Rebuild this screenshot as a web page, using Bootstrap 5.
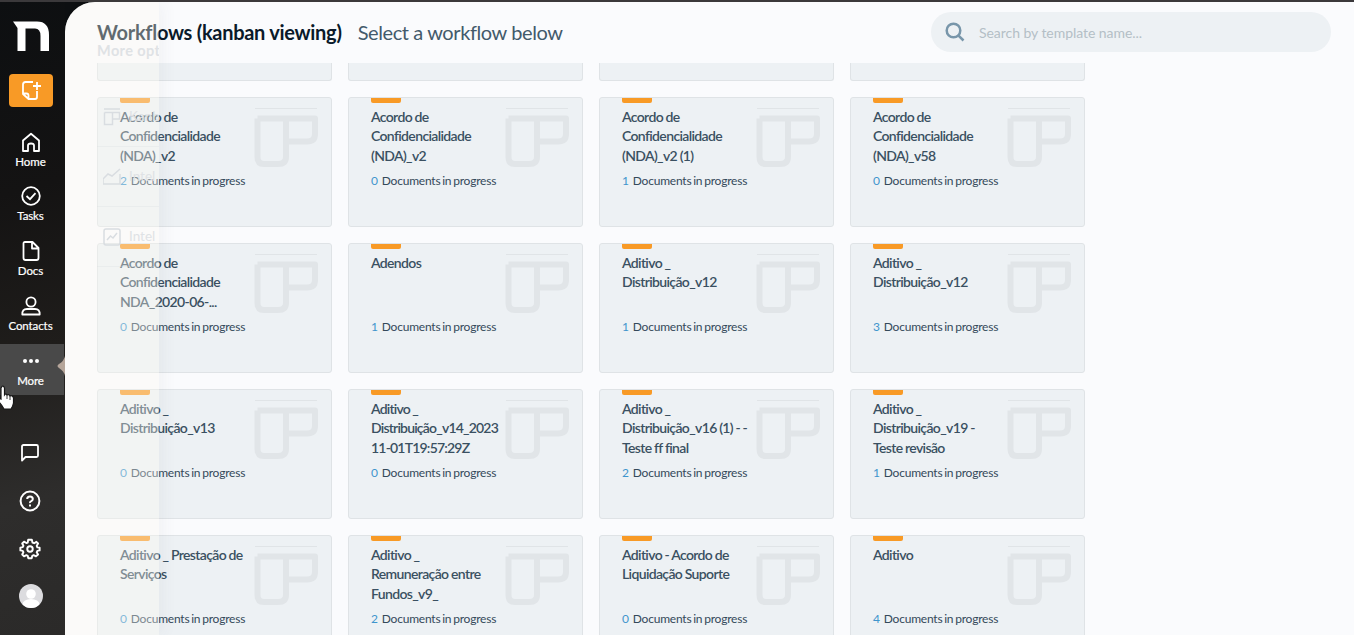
<!DOCTYPE html>
<html lang="en">
<head>
<meta charset="utf-8">
<title>Workflows</title>
<link href="https://cdn.jsdelivr.net/npm/bootstrap@5.3.0/dist/css/bootstrap.min.css" rel="stylesheet">
<style>
body{font-family:Lato,"Liberation Sans",sans-serif;background:linear-gradient(165deg,#0d0f11 0,#141313 30%,#1f1d1b 55%,#2e2d2c 78%,#2b2a29 100%) 0 0/65px 100% no-repeat #0d0f11;height:100vh;overflow:hidden;color:#34495a}
.topline{height:2px;background:#3b393b}
.side{width:65px;color:#fff;font-size:11.5px;letter-spacing:-.1px;padding-right:4px}
.side svg{display:block}
.logo{margin:19px 0 0 1px}
.new-btn{width:44px;height:33px;background:#f89a26;border-radius:4px;margin-top:23px;margin-left:1px}
.side-item{height:55px;line-height:14px;padding-top:10px;width:61px;flex-shrink:0;-webkit-text-stroke:.2px #fff}
.side-item svg{margin-bottom:3px}
.side-item.first{margin-top:15px;height:54px}
.side-item.current{height:51px;width:64px;padding-right:3px;align-self:flex-start;background:#494949;margin-top:3px;padding-top:7px}
.notch{right:-1px;top:12px}
.foot-icon{flex-shrink:0;margin-right:1px}
.main-pane{background:#fafbfd;border-top-left-radius:30px}
.page-head{height:61px;padding:10px 23px 0 32px}
.page-title{font-size:20px;font-weight:700;color:#0a1a2a;letter-spacing:-.28px;margin:0}
.page-sub{font-size:20px;color:#435a6b;margin-left:16px;letter-spacing:-.4px}
.title-row{height:40px}
.search-box{width:400px;height:40px;background:#edf1f4;border-radius:20px;font-size:14px;color:#b4bfc6;padding-left:14px}
.search-box span{margin-left:14px;letter-spacing:-.05px}
.flow-grid{display:grid;grid-template-columns:repeat(4,235px);grid-template-rows:18px;grid-auto-rows:130px;gap:16px;padding-left:32px}
.flow-card{background:#edf1f4;border:1px solid #dfe3e6;border-radius:3px;padding:0 12px 0 22px;overflow:hidden}
.flow-tail{border-top:0;border-radius:0 0 3px 3px}
.tab-mark{width:30px;height:5px;background:#f89a26;border-radius:0 0 2px 2px}
.flow-name{font-size:14px;line-height:19.4px;font-weight:600;width:128px;height:70px;padding-top:4px;letter-spacing:-.64px;word-spacing:-.3px;white-space:nowrap;color:#3a5061}
.flow-name.tight{letter-spacing:-.8px}
.flow-count{font-size:12px;line-height:16px;white-space:nowrap;letter-spacing:-.22px;word-spacing:-1px}
.flow-count b{font-weight:400;color:#3f95cd;margin-right:4px}
.flow-icon{margin-top:9px;margin-right:.5px}
.more-panel{left:65px;top:2px;width:94px;bottom:0;background:rgba(252,250,240,.36);box-shadow:6px 0 14px rgba(60,80,100,.045);clip-path:inset(0 -26px 0 0);border-top-left-radius:30px;color:#dfe2e5}
.more-inner{padding:38px 0 0 32px;white-space:nowrap;overflow:hidden}
.more-title{font-size:14.5px;line-height:22px;font-weight:700;letter-spacing:.4px}
.more-row{height:60px;border-bottom:1px solid rgba(210,215,220,.25);font-size:13.5px;gap:8px;padding-left:6px}
.more-row.first{margin-top:25px}
.more-row svg{flex-shrink:0}
.pointer{left:-2px;top:385px}
</style>
</head>
<body class="d-flex flex-column position-relative">
<svg width="0" height="0" class="position-absolute">
<symbol id="kanban" viewBox="0 0 66 60"><path d="M2 1.5H64" stroke="#e0e4e7" stroke-width="1"/><path d="M4.500 11.500H62V27Q62 34.500 54 34.500H34M4.500 11.500V50Q4.500 57 11 57H25Q33 57 33 50V11.500" fill="none" stroke="#e1e5e8" stroke-width="6" stroke-linejoin="round"/></symbol>
</svg>
<div class="topline flex-shrink-0"></div>
<div class="d-flex flex-grow-1">
<nav class="side d-flex flex-column align-items-center flex-shrink-0">
 <svg class="logo flex-shrink-0" width="36" height="30" viewBox="0 0 36 30"><path fill="#fff" d="M0 .5H24Q36 .5 36 14V30H27.500V15Q27.500 7.500 22 7.500H12.500V30H4.500V7Z"/></svg>
 <div class="new-btn d-flex align-items-center justify-content-center flex-shrink-0"><svg width="21" height="21" viewBox="0 0 21 21" fill="none" stroke="#fff" stroke-width="1.800" stroke-linejoin="round"><path d="M12 2H4.500Q2 2 2 4.500V14L7.500 19H14Q16 19 16 17V11M2 13.500H5.500Q7.500 13.500 7.500 15.500V19M16 2V10M12 6H20"/></svg></div>
 <div class="side-item first d-flex flex-column align-items-center"><svg width="20" height="20" viewBox="0 0 20 20" fill="none" stroke="#fff" stroke-width="1.800" stroke-linejoin="round"><path d="M2 8.500 10 1.700 18 8.500V19H13V13.500Q13 11.500 10 11.500T7 13.500V19H2Z"/></svg>Home</div>
 <div class="side-item d-flex flex-column align-items-center"><svg width="20" height="20" viewBox="0 0 20 20" fill="none" stroke="#fff" stroke-width="1.800"><circle cx="10" cy="10" r="8.800"/><path d="M5.500 10 9 13.200 14.500 7.200"/></svg>Tasks</div>
 <div class="side-item d-flex flex-column align-items-center"><svg width="20" height="20" viewBox="0 0 20 20" fill="none" stroke="#fff" stroke-width="1.800" stroke-linejoin="round"><path d="M4 1H11.500L17.500 7V17Q17.500 19 15.500 19H4.500Q2.500 19 2.500 17V2.500Q2.500 1 4 1ZM11 1V7.500H17.500"/></svg>Docs</div>
 <div class="side-item d-flex flex-column align-items-center"><svg width="20" height="20" viewBox="0 0 20 20" fill="none" stroke="#fff" stroke-width="1.800" stroke-linejoin="round"><circle cx="10" cy="6" r="4.600"/><path d="M1.300 18.500Q1 13 6 13H14Q19 13 18.700 18.500Z"/></svg>Contacts</div>
 <div class="side-item current d-flex flex-column align-items-center position-relative"><svg width="20" height="20" viewBox="0 0 20 20" fill="#fff"><circle cx="4" cy="10" r="2"/><circle cx="10" cy="10" r="2"/><circle cx="16" cy="10" r="2"/></svg>More
  <svg class="notch position-absolute" width="8" height="20" viewBox="0 0 8 20"><path fill="#b5a59a" d="M8 0Q7 5 2 8Q-1 10 2 12Q7 15 8 20Z"/></svg></div>
 <svg class="foot-icon" style="margin-top:48px" width="20" height="20" viewBox="0 0 20 20" fill="none" stroke="#fff" stroke-width="1.800" stroke-linejoin="round"><path d="M2 17.500V3.500Q2 2 3.500 2H16.500Q18 2 18 3.500V12.500Q18 14 16.500 14H5.500Z"/></svg>
 <svg class="foot-icon" style="margin-top:27px" width="22" height="22" viewBox="0 0 22 22" fill="none" stroke="#fff" stroke-width="2"><circle cx="11" cy="11" r="9.400"/><path d="M8.200 9Q8.200 6.500 11 6.500T13.800 9Q13.800 10.500 12.300 11.200T11 13M11 14.500V16.500"/></svg>
 <svg class="foot-icon" style="margin-top:26px" width="22" height="22" viewBox="0 0 24 24" fill="none" stroke="#fff" stroke-width="2.100" stroke-linejoin="round"><circle cx="12" cy="12" r="3"/><path d="M10 2H14L14.700 5L16.500 5.700L19 4.200L20.800 6L19.300 8.600L20 10.200L22.500 10.500V13.500L20 14L19.300 15.600L20.800 18L18.500 20L16 18.800L14.500 19.500L13.800 22H10.200L9.500 19.500L8 18.800L5.500 20L3.500 18L4.800 15.500L4.100 14L1.500 13.500V10.500L4.100 10L4.800 8.500L3.500 6L5.500 4L8 5.500L9.500 5Z"/></svg>
 <svg class="flex-shrink-0" style="margin-top:24px;margin-left:1px" width="24" height="24" viewBox="0 0 24 24"><clipPath id="round"><circle cx="12" cy="12" r="12"/></clipPath><g clip-path="url(#round)"><path fill="#dcdcdf" d="M0 0H24V24H0Z"/><g fill="#fff"><circle cx="12" cy="10" r="4.800"/><ellipse cx="12" cy="20.500" rx="8.500" ry="5.500"/></g></g></svg>
</nav>
<main class="main-pane flex-grow-1 overflow-hidden">
 <header class="page-head d-flex justify-content-between align-items-start">
  <div class="title-row d-flex align-items-center"><h1 class="page-title">Workflows (kanban viewing)</h1><span class="page-sub">Select a workflow below</span></div>
  <div class="search-box d-flex align-items-center"><svg width="20" height="20" viewBox="0 0 20 20" fill="none" stroke="#7896aa" stroke-width="2.500"><circle cx="8.500" cy="8.500" r="6.800"/><path d="M13.300 13.300 18.500 18.500"/></svg><span>Search by template name...</span></div>
 </header>
 <section class="flow-grid" id="grid"></section>
</main>
</div>
<aside class="more-panel position-absolute"><div class="more-inner">
 <div class="more-title">More opt</div>
 <div class="more-row first d-flex align-items-center"><svg width="18" height="18" viewBox="0 0 18 18" fill="none" stroke="#d9dde1" stroke-width="1.500"><path d="M1 1H17M1.500 4.500H16.500V11H9.500M1.500 4.500V16.500H9.500V4.500"/></svg>Kanb</div>
 <div class="more-row d-flex align-items-center"><svg width="18" height="18" viewBox="0 0 18 18" fill="none" stroke="#d9dde1" stroke-width="1.500"><path d="M0 11 5 6 9 8 17 1M0 16H17V6M0 16V11"/></svg>Intel</div>
 <div class="more-row d-flex align-items-center"><svg width="18" height="18" viewBox="0 0 18 18" fill="none" stroke="#d9dde1" stroke-width="1.500"><rect x="1" y="1" width="16" height="16" rx="2"/><path d="M4 12 7.500 8 10 10 14 5"/></svg>Intel</div>
</div></aside>
<svg class="pointer position-absolute" width="18" height="26" viewBox="0 0 18 26"><path d="M3 3Q5-1 6.500 3V10Q8 8 9 10Q11 9 12 11Q14.500 10 15.500 13V18Q15 21 13 24H6Q4 20 0 16L1 13L3 14Z" fill="#fff" stroke="#161616" stroke-width="1.200"/><path d="M9 10V14M12 11V15" stroke="#222" stroke-width=".9"/></svg>
<script src="https://cdn.jsdelivr.net/npm/bootstrap@5.3.0/dist/js/bootstrap.bundle.min.js"></script>
<script>
const flows = [
 ["Acordo de|Confidencialidade|(NDA)_v2",2],["Acordo de|Confidencialidade|(NDA)_v2",0],["Acordo de|Confidencialidade|(NDA)_v2 (1)",1],["Acordo de|Confidencialidade|(NDA)_v58",0],
 ["Acordo de|Confidencialidade|NDA_2020-06-...",0],["Adendos",1],["Aditivo _|Distribuição_v12",1],["Aditivo _|Distribuição_v12",3],
 ["Aditivo _|Distribuição_v13",0],["Aditivo _|Distribuição_v14_2023|11-01T19:57:29Z",0],["Aditivo _|Distribuição_v16 (1) - -|Teste ff final",2],["Aditivo _|Distribuição_v19 -|Teste revisão",1],
 ["Aditivo _ Prestação de|Serviços",0],["Aditivo _|Remuneração entre|Fundos_v9_",2],["Aditivo - Acordo de|Liquidação Suporte",0],["Aditivo",4]
];
document.getElementById("grid").innerHTML =
 '<div class="flow-card flow-tail"></div>'.repeat(4) +
 flows.map(([name, n]) => `<article class="flow-card d-flex justify-content-between"><div><div class="tab-mark"></div><div class="flow-name${name.includes("_2023") ? " tight" : ""}">${name.replaceAll("|","<br>")}</div><div class="flow-count"><b>${n}</b>Documents in progress</div></div><svg class="flow-icon flex-shrink-0" width="66" height="60"><use href="#kanban"/></svg></article>`).join("");
</script>
</body>
</html>
